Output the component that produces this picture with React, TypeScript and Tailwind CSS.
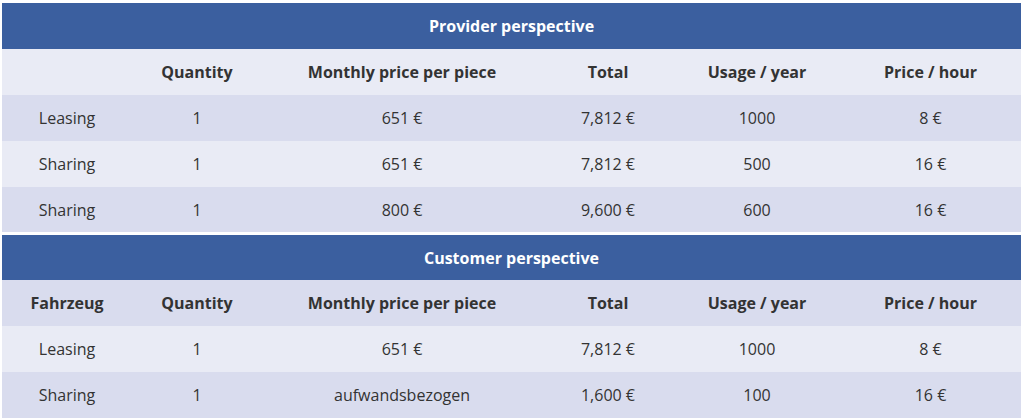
const COLS = 'grid grid-cols-[130px_130px_280px_132px_166px_181px]';

const DARK = 'bg-[#d9dcee]';
const LIGHT = 'bg-[#e9ebf5]';

type Row = { cells: string[]; bold?: boolean; bg: string; h: string };

function Section({ title, rows, titleH }: { title: string; rows: Row[]; titleH: string }) {
  return (
    <div>
      <div className={`${titleH} bg-[#3b5f9f] flex items-center justify-center text-white font-bold text-[16px]`}>
        {title}
      </div>
      {rows.map((r, i) => (
        <div key={i} className={`${COLS} ${r.bg} ${r.h}`}>
          {r.cells.map((c, j) => (
            <div
              key={j}
              className={`flex items-center justify-center text-[16px] text-[#333333] ${r.bold ? 'font-bold' : ''}`}
            >
              {c}
            </div>
          ))}
        </div>
      ))}
    </div>
  );
}

export default function App() {
  const head = ['Quantity', 'Monthly price per piece', 'Total', 'Usage / year', 'Price / hour'];

  const provider: Row[] = [
    { cells: ['', ...head], bold: true, bg: LIGHT, h: 'h-[46px]' },
    { cells: ['Leasing', '1', '651 €', '7,812 €', '1000', '8 €'], bg: DARK, h: 'h-[46px]' },
    { cells: ['Sharing', '1', '651 €', '7,812 €', '500', '16 €'], bg: LIGHT, h: 'h-[46px]' },
    { cells: ['Sharing', '1', '800 €', '9,600 €', '600', '16 €'], bg: DARK, h: 'h-[45px]' },
  ];

  const customer: Row[] = [
    { cells: ['Fahrzeug', ...head], bold: true, bg: DARK, h: 'h-[46px]' },
    { cells: ['Leasing', '1', '651 €', '7,812 €', '1000', '8 €'], bg: LIGHT, h: 'h-[46px]' },
    { cells: ['Sharing', '1', 'aufwandsbezogen', '1,600 €', '100', '16 €'], bg: DARK, h: 'h-[46px]' },
  ];

  return (
    <div className="w-[1024px] h-[420px] bg-white pt-[3px] pl-[2px] font-['Open_Sans','Noto_Sans',sans-serif] overflow-hidden">
      <div className="w-[1019px] flex flex-col gap-[3px]">
        <Section title="Provider perspective" rows={provider} titleH="h-[46px]" />
        <Section title="Customer perspective" rows={customer} titleH="h-[45px]" />
      </div>
    </div>
  );
}
